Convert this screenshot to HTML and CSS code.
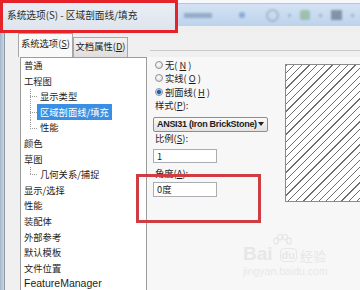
FILE: index.html
```html
<!DOCTYPE html>
<html>
<head>
    <title>系统选项</title>
    <link rel="stylesheet" href="styles.css">
</head>
<body>
    <div class="top">
        <div class="title">系统选项(S) - 区域剖面线/填充</div>
        <div class="toolbar">
            <div class="tb-strip"></div>
            <div class="tb-band">
                <span class="tb-blur tb-word"></span>
                <span class="tb-blur tb-pin"></span>
                <span class="tb-blur tb-ring"></span>
                <span class="tb-blur tb-small"></span>
                <span class="tb-blur tb-green"></span>
                <span class="tb-blur tb-small"></span>
                <span class="tb-blur tb-dark"></span>
                <span class="tb-blur tb-small"></span>
            </div>
        </div>
    </div>

    <div class="main">
        <div class="edge"></div>
        <div class="dialog">
            <div class="tabs">
                <div class="tab active">系统选项(<u>S</u>)</div>
                <div class="tab">文档属性(<u>D</u>)</div>
                <div class="tab-fill"></div>
            </div>

            <div class="page">
                <ul class="tree">
                    <li>普通</li>
                    <li>工程图</li>
                    <li class="child"><span>显示类型</span></li>
                    <li class="child sel"><span>区域剖面线/填充</span></li>
                    <li class="child last"><span>性能</span></li>
                    <li>颜色</li>
                    <li>草图</li>
                    <li class="child last"><span>几何关系/捕捉</span></li>
                    <li>显示/选择</li>
                    <li>性能</li>
                    <li>装配体</li>
                    <li>外部参考</li>
                    <li>默认模板</li>
                    <li>文件位置</li>
                    <li class="latin">FeatureManager</li>
                </ul>

                <div class="options">
                    <div class="form">
                        <div class="radio"><span class="dot"></span>无(<u>N</u>)</div>
                        <div class="radio"><span class="dot"></span>实线(<u>O</u>)</div>
                        <div class="radio"><span class="dot on"></span>剖面线(<u>H</u>)</div>
                        <div class="label">样式(<u>P</u>):</div>
                        <div class="select">
                            <span>ANSI31 (Iron BrickStone)</span>
                            <span class="arrow"></span>
                        </div>
                        <div class="label">比例(<u>S</u>):</div>
                        <div class="input">1</div>
                        <div class="label angle">角度(<u>A</u>):</div>
                        <div class="input second">0度</div>
                    </div>
                    <div class="preview"></div>
                </div>
            </div>
        </div>
    </div>

    <div class="mark-box"></div>

    <div class="watermark">
        <div class="wm-line">
            <span class="wm-bai">Bai</span>
            <svg class="wm-paw" width="20" height="18" viewBox="0 0 20 18">
                <ellipse cx="4" cy="7" rx="2.3" ry="3" fill="none" stroke="currentColor" stroke-width="1.3"/>
                <ellipse cx="8" cy="3" rx="2.3" ry="2.8" fill="none" stroke="currentColor" stroke-width="1.3"/>
                <ellipse cx="13" cy="3" rx="2.3" ry="2.8" fill="none" stroke="currentColor" stroke-width="1.3"/>
                <ellipse cx="17" cy="7" rx="2.3" ry="3" fill="none" stroke="currentColor" stroke-width="1.3"/>
            </svg>
            <span class="wm-du">du</span>
            <span class="wm-cn">经验</span>
        </div>
        <div class="wm-url">jingyan.baidu.com</div>
    </div>
</body>
</html>
```

FILE: styles.css
```css
body {
    margin: 0;
    width: 360px;
    height: 290px;
    overflow: hidden;
    position: relative;
    background: #f7f7f7;
    font-family: "Noto Sans CJK SC", "Noto Sans", sans-serif;
    font-size: 9.3px;
    color: #1c1c1c;
}
u {
    text-decoration: underline;
}

/* title bar + toolbar behind */
.top {
    display: flex;
    height: 33px;
}
.title {
    width: 178px;
    flex: none;
    box-sizing: border-box;
    border: 3px solid #e6222a;
    background: linear-gradient(#eaeff5, #dde4ec);
    padding-left: 4px;
    font-size: 9.7px;
    line-height: 24px;
    white-space: nowrap;
    color: #2a2a2a;
}
.toolbar {
    flex: 1;
    display: flex;
    flex-direction: column;
    background: #efefef;
}
.tb-strip {
    height: 3px;
    background: #f6f8fb;
    border-bottom: 1px solid #b9c6d6;
}
.tb-band {
    height: 22px;
    background: linear-gradient(#d4e3f4, #bcd2ec);
    display: flex;
    align-items: center;
    gap: 9px;
    padding-left: 6px;
}
.tb-blur {
    display: block;
    filter: blur(1.2px);
    opacity: 0.45;
}
.tb-word {
    width: 28px;
    height: 5px;
    background: #5a7396;
    margin-right: 18px;
}
.tb-pin {
    width: 6px;
    height: 6px;
    background: #3f6fb3;
    border-radius: 50%;
}
.tb-ring {
    width: 9px;
    height: 9px;
    border: 2px solid #7d8a99;
    border-radius: 50%;
    margin-left: 12px;
}
.tb-small {
    width: 3px;
    height: 3px;
    background: #7a8797;
}
.tb-green {
    width: 10px;
    height: 10px;
    background: #6d9e62;
    border-radius: 2px;
}
.tb-dark {
    width: 11px;
    height: 10px;
    background: #2f3d52;
}

/* dialog body */
.main {
    display: flex;
    height: 257px;
}
.edge {
    width: 4px;
    flex: none;
    background: linear-gradient(90deg, #a3b6cb, #cbd7e4);
    border-right: 1px solid #8d98a5;
}
.dialog {
    flex: 1;
    display: flex;
    flex-direction: column;
    background: #f0f0f0;
}
.tabs {
    display: flex;
    align-items: flex-end;
    height: 24px;
    padding-left: 13px;
}
.tab {
    width: 55px;
    height: 20px;
    box-sizing: border-box;
    border: 1px solid #a7a7a7;
    border-bottom: none;
    background: linear-gradient(#f3f3f3, #dedede);
    text-align: center;
    line-height: 17px;
    white-space: nowrap;
}
.tab.active {
    height: 24px;
    background: #f9f9f9;
    line-height: 18px;
}
.tab-fill {
    flex: 1;
    align-self: flex-start;
    height: 17px;
    margin-left: 22px;
    border-bottom: 1px solid #cacaca;
}

.page {
    display: flex;
    flex: 1;
    min-height: 0;
}
.tree {
    margin: 0 0 0 15px;
    padding: 0;
    list-style: none;
    width: 127px;
    flex: none;
    box-sizing: border-box;
    border: 1px solid #9c9c9c;
    border-bottom: none;
    background: #fff;
    overflow: hidden;
}
.tree li {
    line-height: 15.6px;
    height: 15.6px;
    padding-left: 3px;
    white-space: nowrap;
}
.tree li.latin {
    font-family: "Liberation Sans", sans-serif;
    font-size: 10.5px;
}
.tree li.child {
    padding-left: 16px;
    background-image:
        repeating-linear-gradient(to bottom, #9a9a9a 0 1px, transparent 1px 2px),
        repeating-linear-gradient(to right, #9a9a9a 0 1px, transparent 1px 2px);
    background-repeat: no-repeat;
    background-position: 9px 0, 9px 50%;
    background-size: 1px 100%, 7px 1px;
}
.tree li.child.last {
    background-size: 1px 50%, 7px 1px;
}
.tree li.child span {
    padding: 1px 3px;
}
.tree li.sel span {
    background: #3a8fe4;
    color: #fff;
}

.options {
    flex: 1;
    display: flex;
    padding: 1px 0 0 6px;
    background: #f7f7f7;
}
.form {
    width: 126px;
    flex: none;
}
.radio {
    display: flex;
    align-items: center;
    gap: 2px;
    height: 13.5px;
    margin-left: 2px;
    white-space: nowrap;
}
.dot {
    width: 8px;
    height: 8px;
    box-sizing: border-box;
    border: 1px solid #8f9091;
    border-radius: 50%;
    background: radial-gradient(circle at 40% 35%, #ffffff, #d4d4d4);
}
.dot.on {
    background: radial-gradient(circle, #1f5fb4 0 1.6px, #8bb8ea 2.3px, #eef2f6 3px);
}
.label {
    margin-left: 2px;
    height: 13px;
    line-height: 13px;
    white-space: nowrap;
}
.select {
    margin-top: 5px;
    width: 115px;
    height: 15px;
    box-sizing: border-box;
    border: 1px solid #8c8d8e;
    border-radius: 2px;
    background: linear-gradient(#fafafa, #e2e2e2);
    display: flex;
    align-items: center;
    justify-content: space-between;
    padding: 0 3px;
    font-family: "Liberation Sans", sans-serif;
    font-weight: bold;
    font-size: 9px;
    letter-spacing: -0.3px;
    white-space: nowrap;
}
.arrow {
    width: 0;
    height: 0;
    border-left: 3px solid transparent;
    border-right: 3px solid transparent;
    border-top: 4px solid #222;
}
.input {
    margin-top: 4px;
    width: 64px;
    height: 14px;
    box-sizing: border-box;
    border: 1px solid #abadb3;
    background: #fff;
    padding-left: 3px;
    line-height: 12px;
}
.label.angle {
    margin-top: 4px;
}
.input.second {
    margin-top: 2px;
    height: 15px;
    line-height: 13px;
}
.preview {
    flex: none;
    width: 90px;
    height: 138px;
    margin: 6px 0 0 6px;
    box-sizing: border-box;
    border: 1px solid #8a8a8a;
    background-color: #fff;
    background-image: repeating-linear-gradient(135deg, #6e6e6e 0 0.9px, transparent 0.9px 5.4px);
}

/* annotation frame drawn over the screenshot */
.mark-box {
    position: absolute;
    left: 136px;
    top: 174px;
    width: 125px;
    height: 49px;
    box-sizing: border-box;
    border: 3px solid #cf3d43;
}

.watermark {
    position: absolute;
    left: 243px;
    top: 234px;
    color: #e7e7e7;
    font-family: "Liberation Sans", sans-serif;
}
.wm-line {
    display: flex;
    align-items: flex-end;
    height: 30px;
}
.wm-bai {
    font-size: 19px;
    font-weight: bold;
    line-height: 20px;
}
.wm-paw {
    margin: 0 0 12px -1px;
}
.wm-du {
    font-size: 11px;
    font-weight: bold;
    line-height: 12px;
    margin-left: -12px;
    margin-bottom: 2px;
    border: 1.5px solid #e7e7e7;
    border-radius: 4px;
    padding: 0 1px;
}
.wm-cn {
    font-family: "Noto Sans CJK SC", sans-serif;
    font-size: 13px;
    line-height: 14px;
    margin-left: 3px;
    margin-bottom: 1px;
}
.wm-url {
    font-size: 10.5px;
    margin-top: 1px;
}
```
